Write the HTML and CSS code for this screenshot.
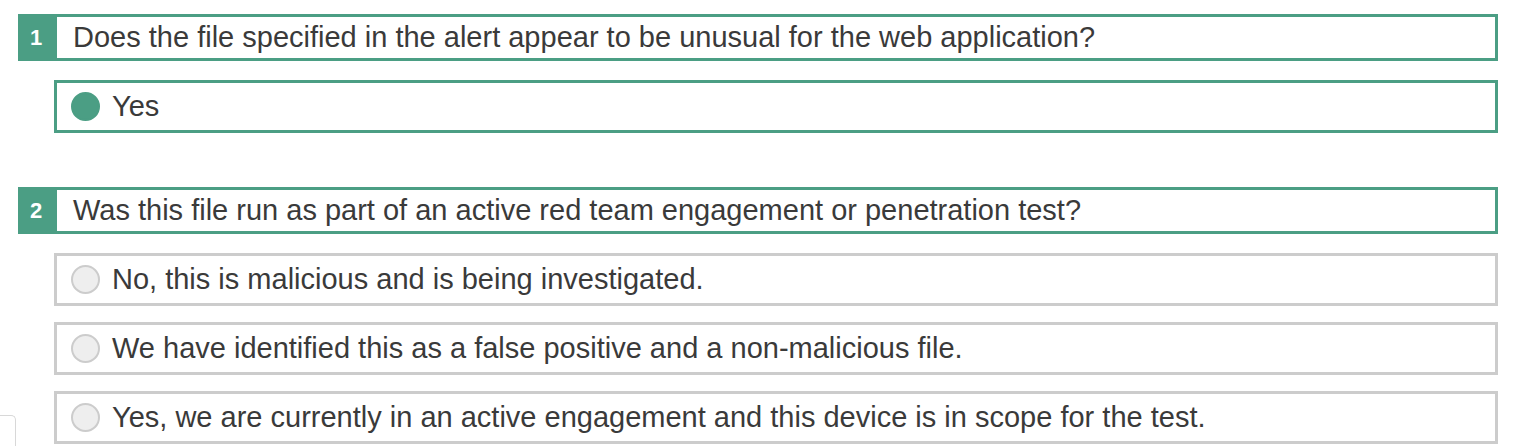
FILE: index.html
```html
<!DOCTYPE html>
<html lang="en">
<head>
    <meta charset="UTF-8">
    <meta name="viewport" content="width=device-width, initial-scale=1.0">
    <title>Alert questions</title>
    <link rel="stylesheet" href="styles.css">
</head>
<body>
    <div class="container">
        <div class="question">
            <div class="q-head">
                <span class="q-num">1</span>
                <span class="q-text">Does the file specified in the alert appear to be unusual for the web application?</span>
            </div>
            <ul class="answers">
                <li class="answer selected"><span class="radio"></span>Yes</li>
            </ul>
        </div>

        <div class="question">
            <div class="q-head">
                <span class="q-num">2</span>
                <span class="q-text">Was this file run as part of an active red team engagement or penetration test?</span>
            </div>
            <ul class="answers">
                <li class="answer"><span class="radio"></span>No, this is malicious and is being investigated.</li>
                <li class="answer"><span class="radio"></span>We have identified this as a false positive and a non-malicious file.</li>
                <li class="answer"><span class="radio"></span>Yes, we are currently in an active engagement and this device is in scope for the test.</li>
            </ul>
        </div>
    </div>
    <div class="side-tab"></div>
</body>
</html>
```

FILE: styles.css
```css
body {
    font-family: "Liberation Sans", Arial, sans-serif;
    margin: 0;
    padding: 0;
    background-color: #fff;
    color: #3a3a3a;
}
.container {
    padding: 14px 18px 0 18px;
}
.question {
    margin-bottom: 54px;
}
.question:last-child {
    margin-bottom: 0;
}
.q-head {
    display: flex;
    height: 47px;
}
.q-num {
    width: 36px;
    flex: none;
    background-color: #4b9e84;
    color: #fff;
    font-weight: bold;
    font-size: 22px;
    display: flex;
    align-items: center;
    justify-content: center;
}
.q-text {
    flex: 1;
    border: 3px solid #4b9e84;
    padding-left: 16px;
    font-size: 29px;
    display: flex;
    align-items: center;
}
.answers {
    list-style: none;
    margin: 19px 0 0 36px;
    padding: 0;
}
.answer {
    height: 53px;
    box-sizing: border-box;
    border: 3px solid #ccc;
    padding-left: 14px;
    font-size: 29px;
    display: flex;
    align-items: center;
    margin-bottom: 16px;
}
.answer:last-child {
    margin-bottom: 0;
}
.answer.selected {
    border-color: #4b9e84;
}
.radio {
    width: 29px;
    height: 29px;
    box-sizing: border-box;
    border-radius: 50%;
    border: 2px solid #ccc;
    background-color: #eee;
    margin-right: 12px;
    flex: none;
}
.selected .radio {
    border-color: #4b9e84;
    background-color: #4b9e84;
}
.side-tab {
    position: absolute;
    left: -5px;
    top: 415px;
    width: 21px;
    height: 31px;
    box-sizing: border-box;
    border: 1px solid #d8d8d8;
    border-bottom: none;
    border-radius: 5px 5px 0 0;
}
```
